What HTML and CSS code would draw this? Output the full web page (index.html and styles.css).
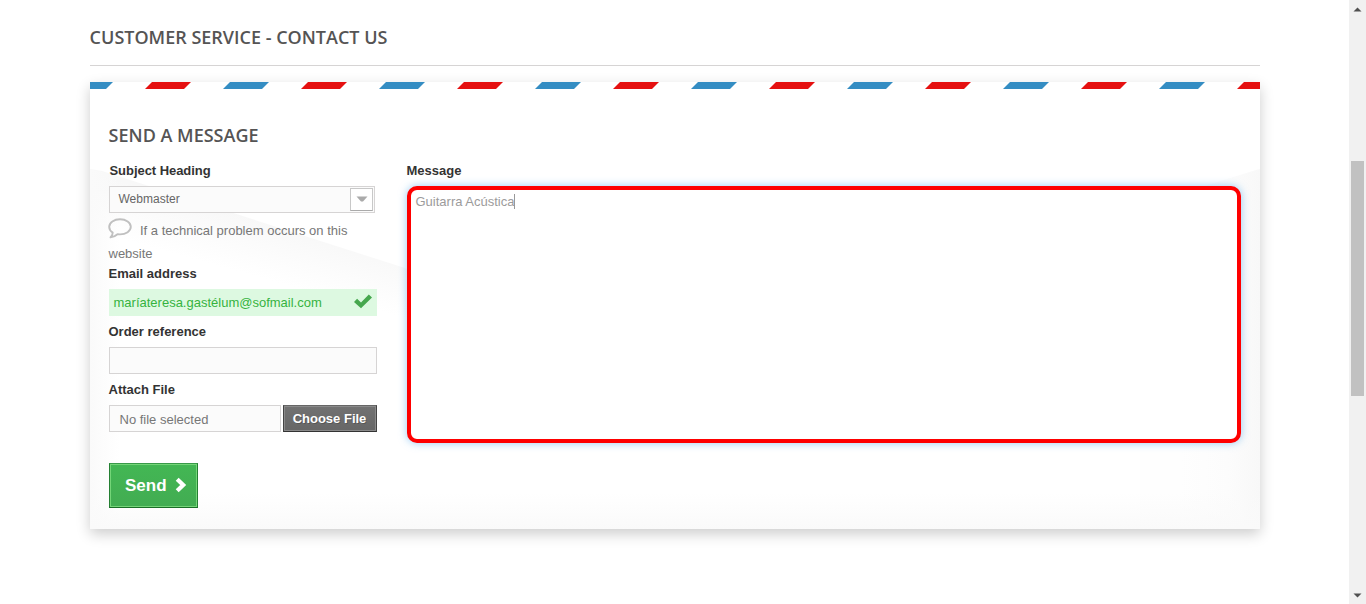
FILE: index.html
```html
<!DOCTYPE html>
<html lang="en">
<head>
<meta charset="utf-8">
<title>Contact us</title>
<link rel="stylesheet" href="styles.css">
</head>
<body>
<div class="viewport">
  <main class="page">
    <h1 class="page-title">Customer service - Contact us</h1>
    <form class="card">
      <svg class="envelope" width="1170" height="447" viewBox="0 0 1170 447" aria-hidden="true">
        <defs>
          <pattern id="airmail" x="-23" y="0" width="156" height="7" patternUnits="userSpaceOnUse">
            <path d="M0 7L7 0H46L39 7Z" fill="#348dc3"/>
            <path d="M78 7L85 0H124L117 7Z" fill="#e51010"/>
          </pattern>
          <linearGradient id="flap" gradientUnits="userSpaceOnUse" x1="200" y1="146" x2="185" y2="200">
            <stop offset="0" stop-color="#f8f8f8"/>
            <stop offset="1" stop-color="#f8f8f8" stop-opacity="0"/>
          </linearGradient>
          <linearGradient id="side" gradientUnits="userSpaceOnUse" x1="1170" y1="0" x2="1090" y2="0">
            <stop offset="0" stop-color="#f8f8f8"/>
            <stop offset="0.4" stop-color="#fcfcfc"/>
            <stop offset="1" stop-color="#fefefe"/>
          </linearGradient>
          <linearGradient id="edge" gradientUnits="userSpaceOnUse" x1="0" y1="0" x2="30" y2="0">
            <stop offset="0" stop-color="#fafafa"/>
            <stop offset="1" stop-color="#fafafa" stop-opacity="0"/>
          </linearGradient>
          <linearGradient id="base" x1="0" y1="0" x2="0" y2="1">
            <stop offset="0" stop-color="#fafafa" stop-opacity="0"/>
            <stop offset="1" stop-color="#fafafa"/>
          </linearGradient>
        </defs>
        <path d="M0 87L12 89L318 187L500 245L318 300L0 200Z" fill="url(#flap)"/>
        <path d="M0 87L30 94V447H0Z" fill="url(#edge)"/>
        <path d="M1170 87L1166 88L1050 124V447H1170Z" fill="url(#side)"/>
        <rect y="411" width="1170" height="36" fill="url(#base)"/>
        <rect width="1170" height="7" fill="url(#airmail)"/>
      </svg>
      <h2 class="card-title">Send a message</h2>
      <div class="columns">
        <div class="details">
          <label class="label label-subject">Subject Heading</label>
          <div class="select"><span>Webmaster</span>
            <span class="select-arrow"><svg width="12" height="7" viewBox="0 0 12 7"><path d="M0.5 0.5H11.5L7 5.6H5Z" fill="#aaa"/></svg></span>
          </div>
          <p class="hint"><svg class="bubble" width="24" height="21" viewBox="0 0 24 21"><path d="M12 1.2C18 1.2 22.8 4.6 22.8 8.8S18 16.4 12 16.4L9.5 16.2C7.5 18 5.2 19 2.5 19.3C3.9 18.2 4.6 16.6 4.7 14.6C2.4 13.2 1.2 11.1 1.2 8.8C1.2 4.6 6 1.2 12 1.2Z" fill="none" stroke="#c0c0c0" stroke-width="1.9" stroke-linejoin="round"/></svg>If a technical problem occurs on this website</p>
          <label class="label">Email address</label>
          <div class="field field-ok"><span>maríateresa.gastélum@sofmail.com</span>
            <svg class="check" width="18" height="15" viewBox="0 0 18 15"><path d="M0 7.9L3.1 4.8L7 8.4L14.8 0.4L18 3.4L7 14.3Z" fill="#46a74e"/></svg>
          </div>
          <label class="label">Order reference</label>
          <div class="field"></div>
          <label class="label">Attach File</label>
          <div class="upload">
            <span class="upload-name">No file selected</span>
            <button type="button" class="upload-button">Choose File</button>
          </div>
          <button type="button" class="send"><span>Send</span>
            <svg class="chevron" width="12" height="16" viewBox="0 0 12 16"><path d="M2.2 2.2L8.2 8L2.2 13.8" fill="none" stroke="#fff" stroke-width="4.2"/></svg>
          </button>
        </div>
        <div class="message">
          <label class="label">Message</label>
          <div class="textarea"><span>Guitarra Acústica</span><i class="caret"></i></div>
        </div>
      </div>
    </form>
  </main>
  <div class="scrollbar">
    <svg width="9" height="5" viewBox="0 0 9 5"><path d="M0.5 4.5H8.5L4.5 0.5Z" fill="#505050"/></svg>
    <div class="thumb"></div>
    <svg class="down" width="9" height="5" viewBox="0 0 9 5"><path d="M0.5 0.5H8.5L4.5 4.5Z" fill="#505050"/></svg>
  </div>
</div>
</body>
</html>
```
FILE: styles.css
```css
* { box-sizing: border-box; }
body {
  margin: 0;
  background: #fff;
  color: #777;
  font: 13px/18px "Liberation Sans", Arial, sans-serif;
  overflow: hidden;
}
.viewport { display: flex; height: 604px; }
.page { flex: 1; padding: 0 89px 0 90px; }
.page-title, .card-title {
  margin: 0;
  color: #555454;
  font: 600 18px/22px "Open Sans", sans-serif;
  text-transform: uppercase;
}
.page-title {
  height: 66px;
  padding-top: 26px;
  border-bottom: 1px solid #d6d4d4;
  text-indent: -0.4px;
}
.card {
  position: relative;
  height: 447px;
  margin-top: 16px;
  padding: 42px 19px 0;
  background: #fff;
  box-shadow: 0 5px 13px rgba(0, 0, 0, 0.2);
}
.envelope { position: absolute; top: 0; left: 0; }
.card-title, .columns { position: relative; }
.card-title { text-indent: -0.4px; }
.columns { display: flex; gap: 30px; padding-top: 15px; }
.details { width: 268px; }
.message { width: 834px; }
.label {
  display: block;
  height: 25px;
  padding-top: 1px;
  color: #333;
  font-weight: bold;
  line-height: 18px;
  text-indent: -0.5px;
}
.label-subject { padding-left: 1px; letter-spacing: -0.05px; }
.select {
  display: flex;
  justify-content: space-between;
  width: 266px;
  height: 27px;
  padding: 1px 1px 0 9px;
  border: 1px solid #d6d4d4;
  background: #fbfbfb;
  color: #666;
  font-size: 12px;
  line-height: 22px;
  text-indent: -0.5px;
}
.select-arrow {
  display: flex;
  align-items: center;
  justify-content: center;
  width: 23px;
  height: 23px;
  border: 1px solid #c8c8c8;
  border-bottom-color: #aaa;
  background: #fff;
}
.hint { height: 51px; margin: 0 0 0 -0.5px; padding-top: 5px; line-height: 23px; }
.bubble { margin: 0 8px -4px -0.5px; }
.field {
  height: 27px;
  margin-bottom: 6px;
  border: 1px solid #d6d4d4;
  background: #fbfbfb;
}
.field-ok {
  display: flex;
  align-items: center;
  justify-content: space-between;
  padding: 0 4px;
  border-color: #ddf9e1;
  background: #ddf9e1;
  color: #35b33f;
  text-indent: -0.5px;
}
.check { margin-bottom: 2px; }
.upload { display: flex; gap: 2px; height: 27px; }
.upload-name {
  width: 172px;
  padding: 5px 0 0 10px;
  border: 1px solid #d6d4d4;
  background: #fbfbfb;
  text-indent: -0.5px;
}
.upload-button {
  flex: 1;
  padding: 0;
  border: 1px solid #444;
  border-color: #666 #444 #333;
  background: linear-gradient(#727272, #666);
  box-shadow: inset 0 0 0 1px #8a8a8a;
  color: #fff;
  font: bold 13px/23px "Liberation Sans", Arial, sans-serif;
  text-indent: -1px;
  text-shadow: 1px 1px rgba(0, 0, 0, 0.2);
}
.send {
  display: flex;
  align-items: center;
  gap: 8px;
  width: 89px;
  height: 45px;
  margin-top: 31px;
  padding: 0 0 0 15px;
  border: 1px solid #2f8f3d;
  border-color: #399a49 #247f32 #1a6d27;
  background: linear-gradient(#43b754, #42ac52);
  box-shadow: inset 0 0 0 1px #74d578;
  color: #fff;
  font: bold 17px/21px "Liberation Sans", Arial, sans-serif;
}
.chevron { margin-bottom: 2px; }
.textarea {
  display: flex;
  height: 257px;
  padding: 3px 5px;
  border: 4px solid #f00;
  border-radius: 10px;
  background: #fff;
  box-shadow: 0 0 9px rgba(82, 168, 236, 0.6);
  color: #9c9b9b;
  text-indent: -0.5px;
}
.caret { width: 1px; height: 15px; margin: 1px 0 0 -1px; background: #999; }
.scrollbar {
  display: flex;
  flex-direction: column;
  align-items: center;
  width: 17px;
  padding: 7px 0 6px;
  background: #f1f1f1;
}
.thumb { width: 13px; height: 235px; margin-top: 149px; background: #c1c1c1; }
.down { margin-top: auto; }
```
